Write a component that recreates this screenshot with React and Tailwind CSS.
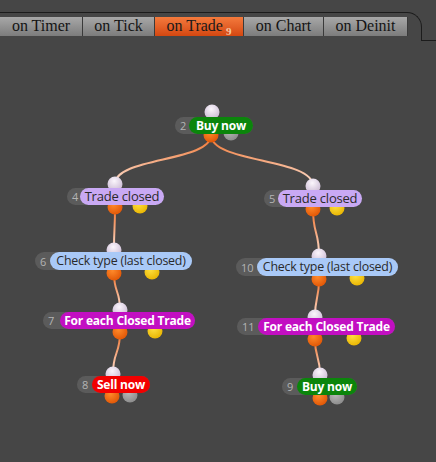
import React from 'react';

const tabs = [
  { label: 'on Timer', w: 83 },
  { label: 'on Tick', w: 72 },
  { label: 'on Trade', w: 89, active: true, badge: '9' },
  { label: 'on Chart', w: 80 },
  { label: 'on Deinit', w: 84 },
];

// block nodes on the canvas: position, label pill and colours
const nodes = [
  { id: 2, x: 175, y: 117, h: 17, off: 14, lw: 64, fs: 12, text: 'Buy now', cls: 'bg-[#0b850b] text-white font-bold' },
  { id: 4, x: 67, y: 188, h: 17, off: 13, lw: 84, fs: 13, text: 'Trade closed', cls: 'bg-[#c9a9f4] text-[#2a2a2a]' },
  { id: 5, x: 264, y: 190, h: 17, off: 14, lw: 84, fs: 13, text: 'Trade closed', cls: 'bg-[#c9a9f4] text-[#2a2a2a]' },
  { id: 6, x: 35, y: 252, h: 18, off: 15, lw: 142, fs: 12.4, text: 'Check type (last closed)', cls: 'bg-[#a9c9f7] text-[#2a2a2a]' },
  { id: 10, x: 236, y: 258, h: 18, off: 21, lw: 141, fs: 12.4, text: 'Check type (last closed)', cls: 'bg-[#a9c9f7] text-[#2a2a2a]' },
  { id: 7, x: 43, y: 312, h: 17, off: 17, lw: 135, fs: 12, text: 'For each Closed Trade', cls: 'bg-[#c20fc2] text-white font-bold' },
  { id: 11, x: 237, y: 318, h: 17, off: 21, lw: 137, fs: 12, text: 'For each Closed Trade', cls: 'bg-[#c20fc2] text-white font-bold' },
  { id: 8, x: 77, y: 376, h: 17, off: 15, lw: 58, fs: 12, text: 'Sell now', cls: 'bg-[#f20000] text-white font-bold' },
  { id: 9, x: 282, y: 378, h: 17, off: 15, lw: 60, fs: 12, text: 'Buy now', cls: 'bg-[#0b850b] text-white font-bold' },
];

// input / output pins: [in, out, side] with side kind
const pins = [
  { inp: [212, 112], out: [211, 135], side: [231, 133], kind: 'gray' },
  { inp: [115, 184], out: [115, 207], side: [140, 206], kind: 'yellow' },
  { inp: [313, 186], out: [313, 209], side: [337, 208], kind: 'yellow' },
  { inp: [114, 250], out: [114, 273], side: [152, 272], kind: 'yellow' },
  { inp: [319, 256], out: [319, 279], side: [357, 278], kind: 'yellow' },
  { inp: [120, 310], out: [120, 332], side: [155, 331], kind: 'yellow' },
  { inp: [315, 317], out: [315, 339], side: [354, 338], kind: 'yellow' },
  { inp: [113, 374], out: [112, 396], side: [130, 395], kind: 'gray' },
  { inp: [320, 375], out: [320, 398], side: [337, 397], kind: 'gray' },
];

const links = [
  [0, 1], [0, 2], [1, 3], [2, 4], [3, 5], [4, 6], [5, 7], [6, 8],
];

function Tab({ tab }) {
  return (
    <div
      style={{ width: tab.w }}
      className={`relative h-[19px] flex items-center justify-center border-r border-[#3a3a3a] text-[16px] leading-none ${
        tab.active
          ? 'bg-gradient-to-b from-[#f47a3c] to-[#d4470f] text-[#1a1a1a]'
          : 'bg-gradient-to-b from-[#a8a8a8] to-[#7c7c7c] text-[#141414]'
      }`}
    >
      <span className="-mt-[2px]">{tab.label}</span>
      {tab.badge && (
        <span className="ml-[3px] mt-[10px] text-[11px] font-bold text-[#f5c9a4]">{tab.badge}</span>
      )}
    </div>
  );
}

function Node({ n }) {
  return (
    <div
      className="absolute rounded-full bg-[#5b5b5b] flex items-center"
      style={{ left: n.x, top: n.y, height: n.h, width: n.off + n.lw }}
    >
      <span className="pl-[5px] text-[11px] text-[#b4b4b4] leading-none" style={{ width: n.off }}>
        {n.id}
      </span>
      <span
        className={`h-full rounded-full flex items-center justify-center leading-none whitespace-nowrap tracking-[-0.2px] ${n.cls}`}
        style={{ width: n.lw, fontSize: n.fs }}
      >
        {n.text}
      </span>
    </div>
  );
}

function Wires() {
  return (
    <svg className="absolute left-0 top-0" width="436" height="462">
      <defs>
        <radialGradient id="pin-in" cx="0.45" cy="0.3" r="0.7">
          <stop offset="0" stopColor="#fbf6fc" />
          <stop offset="1" stopColor="#cbbad4" />
        </radialGradient>
        <radialGradient id="pin-out" cx="0.4" cy="0.35" r="0.7">
          <stop offset="0" stopColor="#ff8a2a" />
          <stop offset="1" stopColor="#e05505" />
        </radialGradient>
        <radialGradient id="pin-yellow" cx="0.4" cy="0.35" r="0.7">
          <stop offset="0" stopColor="#ffe040" />
          <stop offset="1" stopColor="#e8b400" />
        </radialGradient>
        <radialGradient id="pin-gray" cx="0.4" cy="0.35" r="0.7">
          <stop offset="0" stopColor="#b8b8b8" />
          <stop offset="1" stopColor="#8a8a8a" />
        </radialGradient>
        {links.map(([a, b], i) => (
          <linearGradient
            key={i}
            id={`wire-${i}`}
            gradientUnits="userSpaceOnUse"
            x1="0"
            y1={pins[a].out[1]}
            x2="0"
            y2={pins[b].inp[1]}
          >
            <stop offset="0" stopColor="#f0702a" />
            <stop offset="1" stopColor="#fbe0d2" />
          </linearGradient>
        ))}
      </defs>
      {links.map(([a, b], i) => {
        const [x1, y1] = pins[a].out;
        const [x2, y2] = pins[b].inp;
        const k = (y2 - y1) * 0.55;
        return (
          <path
            key={i}
            d={`M${x1} ${y1} C${x1} ${y1 + k} ${x2} ${y2 - k} ${x2} ${y2}`}
            fill="none"
            stroke={`url(#wire-${i})`}
            strokeWidth="2"
          />
        );
      })}
      {pins.map((p, i) => (
        <g key={i}>
          <circle cx={p.inp[0]} cy={p.inp[1]} r="7.5" fill="url(#pin-in)" />
          <circle cx={p.out[0]} cy={p.out[1]} r="7.5" fill="url(#pin-out)" />
          <circle cx={p.side[0]} cy={p.side[1]} r="7.5" fill={`url(#pin-${p.kind})`} />
        </g>
      ))}
    </svg>
  );
}

export default function App() {
  return (
    <div className="w-[436px] h-[462px] bg-[#464646] flex flex-col overflow-hidden">
      <div className="flex h-[41px] shrink-0">
        <div className="mt-[12px] w-[422px] h-[29px] border-t border-r border-[#1c1c1c] rounded-tr-[15px] pt-[4px] font-['Liberation_Serif',serif]">
          <div className="flex">
            {tabs.map(t => (
              <Tab key={t.label} tab={t} />
            ))}
          </div>
        </div>
        <div className="flex-1 border-b border-[#1c1c1c]" />
      </div>
      <div className="relative flex-1 font-['Open_Sans',sans-serif]">
        <div className="absolute left-0 -top-[41px] w-[436px] h-[462px]">
          <Wires />
          {nodes.map(n => (
            <Node key={n.id} n={n} />
          ))}
        </div>
      </div>
    </div>
  );
}
